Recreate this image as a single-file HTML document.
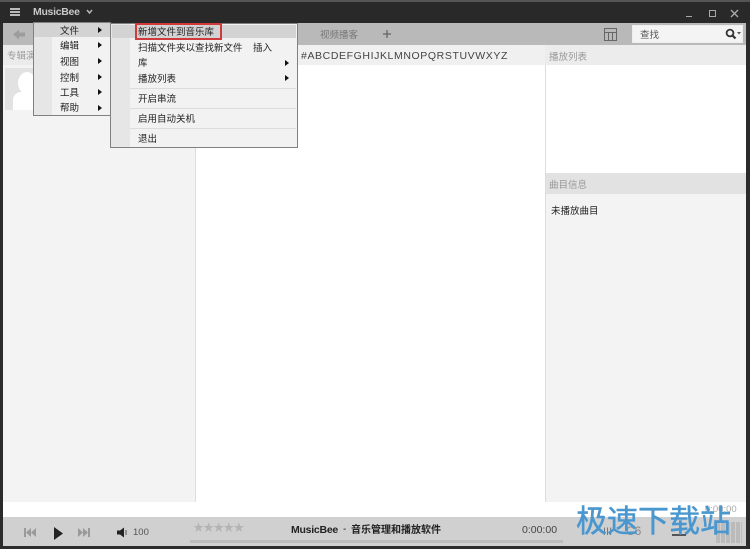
<!DOCTYPE html>
<html><head><meta charset="utf-8">
<style>
html,body{margin:0;padding:0}
body{width:750px;height:549px;position:relative;overflow:hidden;background:#2b2b2b;font-family:"Liberation Sans","Noto Sans CJK SC",sans-serif;font-size:9.5px;color:#222}
.a{position:absolute}
.t{position:absolute;white-space:nowrap;line-height:12px}
.arrow{position:absolute;width:0;height:0;border-left:4px solid #111;border-top:3px solid transparent;border-bottom:3px solid transparent}
.sep{position:absolute;height:1px;background:#dcdcdc}
</style></head><body>
<div class="a" style="left:0;top:0;width:750px;height:2px;background:#555"></div>
<div class="a" style="left:0;top:2px;width:750px;height:21px;background:#292929"></div>
<div class="a" style="left:10px;top:8px;width:10px;height:2px;background:#bbb"></div>
<div class="a" style="left:10px;top:11px;width:10px;height:2px;background:#bbb"></div>
<div class="a" style="left:10px;top:14px;width:10px;height:2px;background:#bbb"></div>
<div class="t" style="left:33px;top:6px;font-size:10.5px;font-weight:bold;color:#c8c8c8;letter-spacing:-.3px">MusicBee</div>
<svg class="a" style="left:86px;top:9px" width="7" height="6"><path d="M1 1L3.5 4L6 1" stroke="#bbb" stroke-width="1.4" fill="none"/></svg>
<div class="a" style="left:686px;top:16px;width:6px;height:1px;background:#aaa"></div>
<div class="a" style="left:709px;top:10px;width:5px;height:5px;border:1.5px solid #aaa"></div>
<svg class="a" style="left:730px;top:9px" width="9" height="9"><path d="M1 1L8 8M8 1L1 8" stroke="#aaa" stroke-width="1.4"/></svg>

<div class="a" style="left:3px;top:23px;width:743px;height:22px;background:#b9b9b9"></div>
<svg class="a" style="left:13px;top:29px" width="13" height="11"><path d="M0 5.5L6 0.5V3.5H12V7.5H6V10.5Z" fill="#9d9d9d"/></svg>
<div class="t" style="left:320px;top:30px;color:#777">视频播客</div>
<svg class="a" style="left:382px;top:29px" width="10" height="10"><path d="M5 1V9M1 5H9" stroke="#666" stroke-width="1.3"/></svg>
<svg class="a" style="left:604px;top:27px" width="13" height="14"><path d="M.5 1.5H12.5V13.5H.5ZM.5 5.5H12.5M4.5 5.5V13.5M8.5 5.5V13.5" stroke="#666" fill="none"/></svg>
<div class="a" style="left:632px;top:25px;width:111px;height:18px;background:#f4f4f4;border:1px solid #eee;box-sizing:border-box"></div>
<div class="t" style="left:640px;top:30px;color:#555">查找</div>
<svg class="a" style="left:725px;top:28px" width="16" height="12"><circle cx="5" cy="5" r="3.4" stroke="#333" stroke-width="1.8" fill="none"/><path d="M7.5 7.5L10.5 10.5" stroke="#333" stroke-width="2.2"/><path d="M12 4H16L14 6.5Z" fill="#555"/></svg>

<div class="a" style="left:3px;top:45px;width:192px;height:457px;background:#f3f3f3"></div>
<div class="a" style="left:3px;top:45px;width:192px;height:20px;background:#ebebeb"></div>
<div class="t" style="left:7px;top:51px;color:#999">专辑演出者</div>
<div class="a" style="left:5px;top:68px;width:39px;height:42px;background:#e2e2e2;overflow:hidden"><div class="a" style="left:13px;top:4px;width:18px;height:22px;border-radius:50%;background:#fff"></div><div class="a" style="left:8px;top:24px;width:28px;height:20px;border-radius:8px 8px 0 0;background:#fff"></div></div>
<div class="a" style="left:195px;top:45px;width:350px;height:457px;background:#fff;border-left:1px solid #ddd;box-sizing:border-box"></div>
<div class="a" style="left:195px;top:45px;width:350px;height:20px;background:#f0f0f0"></div>
<div class="t" style="left:301px;top:50px;font-size:10.5px;color:#444;letter-spacing:.6px">#ABCDEFGHIJKLMNOPQRSTUVWXYZ</div>
<div class="a" style="left:545px;top:45px;width:201px;height:457px;background:#f3f3f3;border-left:1px solid #ddd;box-sizing:border-box"></div>
<div class="a" style="left:545px;top:45px;width:201px;height:20px;background:#ececec"></div>
<div class="t" style="left:549px;top:52px;color:#999">播放列表</div>
<div class="a" style="left:546px;top:65px;width:200px;height:108px;background:#fff"></div>
<div class="a" style="left:546px;top:173px;width:200px;height:21px;background:#e2e2e2"></div>
<div class="t" style="left:549px;top:180px;color:#999">曲目信息</div>
<div class="t" style="left:551px;top:206px;color:#222">未播放曲目</div>

<div class="a" style="left:3px;top:502px;width:743px;height:15px;background:#fff"></div>
<div class="a" style="left:3px;top:517px;width:743px;height:29px;background:#d0d0d0"></div>
<div class="a" style="left:0;top:546px;width:750px;height:3px;background:#2b2b2b"></div>
<svg class="a" style="left:24px;top:528px" width="12" height="9"><path d="M0 0H2V9H0ZM7 0V9L2 4.5ZM12 0V9L7 4.5Z" fill="#9a9a9a"/></svg>
<svg class="a" style="left:53px;top:526px" width="11" height="15"><path d="M1 1V14L10 7.5Z" fill="#222"/></svg>
<svg class="a" style="left:78px;top:528px" width="12" height="9"><path d="M0 0V9L5 4.5ZM5 0V9L10 4.5ZM10 0H12V9H10Z" fill="#9a9a9a"/></svg>
<svg class="a" style="left:117px;top:527px" width="11" height="11"><path d="M0 3.5H3L7 .5V10.5L3 7.5H0Z" fill="#222"/><path d="M9 3V8" stroke="#555" stroke-width="1"/></svg>
<div class="t" style="left:133px;top:527px;color:#555;font-size:9.5px">100</div>
<div class="t" style="left:193px;top:522px;font-size:11px;letter-spacing:-.9px;color:#b4b4b4">★★★★★</div>
<div class="a" style="left:190px;top:540px;width:373px;height:3px;background:#bcbcbc"></div>
<div class="t" style="left:291px;top:524px;font-size:10.5px;font-weight:bold;letter-spacing:-.25px;color:#222">MusicBee</div>
<div class="t" style="left:343px;top:524px;font-size:10px;color:#222">-</div>
<div class="t" style="left:351px;top:525px;font-size:10px;font-weight:bold;color:#222">音乐管理和播放软件</div>
<div class="t" style="left:522px;top:524px;font-size:10.5px;color:#444">0:00:00</div>
<div class="t" style="left:603px;top:526px;color:#777;font-size:11px">III</div>
<div class="t" style="left:626px;top:525px;color:#888;font-size:12px">C6</div>
<div class="a" style="left:672px;top:534px;width:14px;height:2px;background:#555"></div>
<div class="a" style="left:716px;top:522px;width:26px;height:21px;background:repeating-linear-gradient(90deg,#bbb 0 4px,#d0d0d0 4px 5px)"></div>
<div class="t" style="left:705px;top:504px;color:#aaa;font-size:9.5px">0:00:00</div>
<div class="t" style="left:576px;top:499px;font-size:31px;line-height:40px;font-weight:normal;color:#4a97cf;-webkit-text-stroke:.5px #4a97cf;font-family:'Noto Sans CJK SC',sans-serif">极速下载站</div>

<!-- Menu 1 -->
<div class="a" style="left:33px;top:22px;width:78px;height:94px;background:#f2f2f2;border:1px solid #808080;box-sizing:border-box"></div>
<div class="a" style="left:34px;top:23px;width:18px;height:92px;background:#e6e6e6"></div>
<div class="a" style="left:34px;top:23px;width:76px;height:14px;background:#d3d3d3"></div>
<div class="t" style="left:60px;top:26px">文件</div><div class="arrow" style="left:98px;top:27px"></div>
<div class="t" style="left:60px;top:41px">编辑</div><div class="arrow" style="left:98px;top:42px"></div>
<div class="t" style="left:60px;top:57px">视图</div><div class="arrow" style="left:98px;top:58px"></div>
<div class="t" style="left:60px;top:73px">控制</div><div class="arrow" style="left:98px;top:74px"></div>
<div class="t" style="left:60px;top:88px">工具</div><div class="arrow" style="left:98px;top:89px"></div>
<div class="t" style="left:60px;top:103px">帮助</div><div class="arrow" style="left:98px;top:105px"></div>
<!-- Menu 2 -->
<div class="a" style="left:110px;top:23px;width:188px;height:125px;background:#f2f2f2;border:1px solid #808080;box-sizing:border-box"></div>
<div class="a" style="left:111px;top:24px;width:19px;height:123px;background:#e6e6e6"></div>
<div class="a" style="left:112px;top:25px;width:184px;height:13px;background:#d3d3d3"></div>
<div class="a" style="left:135px;top:23px;width:87px;height:17px;border:2px solid #d03a3a;box-sizing:border-box"></div>
<div class="t" style="left:138px;top:27px">新增文件到音乐库</div>
<div class="t" style="left:138px;top:43px">扫描文件夹以查找新文件</div>
<div class="t" style="left:253px;top:43px">插入</div>
<div class="t" style="left:138px;top:58px">库</div><div class="arrow" style="left:285px;top:60px"></div>
<div class="t" style="left:138px;top:74px">播放列表</div><div class="arrow" style="left:285px;top:75px"></div>
<div class="sep" style="left:130px;top:88px;width:166px"></div>
<div class="t" style="left:138px;top:94px">开启串流</div>
<div class="sep" style="left:130px;top:108px;width:166px"></div>
<div class="t" style="left:138px;top:114px">启用自动关机</div>
<div class="sep" style="left:130px;top:128px;width:166px"></div>
<div class="t" style="left:138px;top:134px">退出</div>
</body></html>
